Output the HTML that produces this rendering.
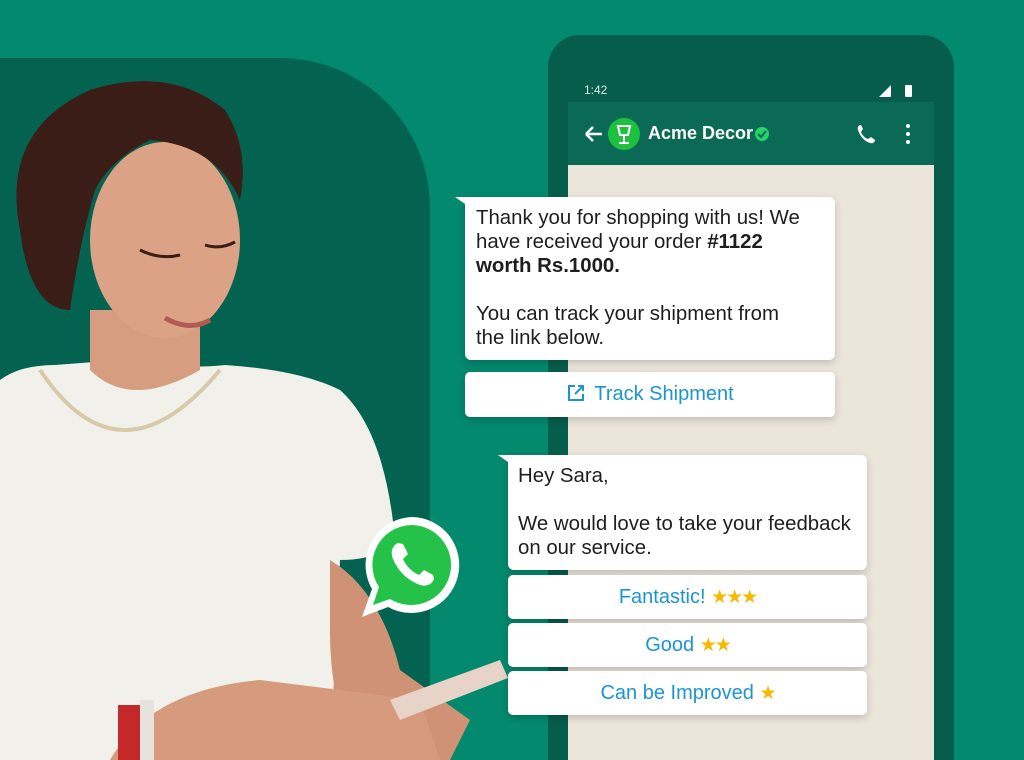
<!DOCTYPE html>
<html><head><meta charset="utf-8"><style>
*{margin:0;padding:0;box-sizing:border-box}
html,body{width:1024px;height:760px;overflow:hidden}
body{background:#03896e;font-family:"Liberation Sans",Arial,sans-serif;position:relative}
.abs{position:absolute}
.bub{position:absolute;background:#fff;border-radius:6px;box-shadow:0 3px 8px rgba(0,0,0,.18);color:#1e1e1e;font-size:20.4px;line-height:24px;white-space:nowrap}
.btn{position:absolute;background:#fff;border-radius:5px;box-shadow:0 3px 8px rgba(0,0,0,.18);color:#1a95d4;font-size:20px;text-align:center;line-height:44px}
.star{color:#f6b800;font-size:19px;letter-spacing:-2px}
</style></head><body>
<div class="abs" style="left:-20px;top:58px;width:450px;height:702px;background:#046350;border-top-right-radius:150px"></div>
<div class="abs" style="left:548px;top:35px;width:406px;height:725px;background:#075d4b;border-radius:32px 32px 0 0"></div>
<div class="abs" style="left:568px;top:78px;width:366px;height:682px;background:#ece5da"></div>
<div class="abs" style="left:568px;top:78px;width:366px;height:24px;background:#075d4b"></div>
<div class="abs" style="left:584px;top:83px;color:#d9e8e3;font-size:12px">1:42</div>
<svg class="abs" style="left:876px;top:83px" width="40" height="16"><polygon points="3,14 15,14 15,2" fill="#fff"/><rect x="29" y="2" width="7" height="12" rx="1" fill="#fff"/></svg>
<div class="abs" style="left:568px;top:102px;width:366px;height:63px;background:#0b6a55"></div>
<svg class="abs" style="left:580px;top:118px" width="340" height="34">
<path d="M6 16 H22 M6 16 L13 9 M6 16 L13 23" stroke="#fff" stroke-width="2.5" fill="none"/>
<circle cx="44" cy="16" r="16" fill="#1ec13f"/>
<path d="M38 8 H50 L48 17 H40 Z M44 17 V24 M39 25 H49" stroke="#fff" stroke-width="2" fill="none"/>
<circle cx="182" cy="16" r="7" fill="#26d366"/><path d="M178 16 L181 19 L186 13" stroke="#0b6a55" stroke-width="2" fill="none"/>
<path d="M281 7 c-2 0 -4 2 -3 5 c2 6 6 11 12 13 c3 1 5 -1 5 -3 l-4 -3 l-3 2 c-3 -1 -6 -4 -7 -7 l2 -3 z" fill="#fff"/>
<circle cx="328" cy="8" r="2" fill="#fff"/><circle cx="328" cy="16" r="2" fill="#fff"/><circle cx="328" cy="24" r="2" fill="#fff"/>
</svg>
<div class="abs" style="left:648px;top:123px;color:#fff;font-size:18px;font-weight:bold">Acme Decor</div>
<svg class="abs" style="left:0;top:70px" width="520" height="690">
<ellipse cx="255" cy="640" rx="120" ry="50" fill="#c98a6c"/>
<path d="M0 310 Q20 295 55 295 L120 290 Q180 300 225 295 Q300 300 340 320 Q385 360 395 470 Q380 490 340 490 L330 690 L0 690 Z" fill="#f1f0ea"/>
<path d="M40 300 Q120 420 220 300" stroke="#d8c9a8" stroke-width="4" fill="none"/>
<path d="M90 240 L90 300 Q130 340 200 300 L200 240 Z" fill="#d79d80"/>
<path d="M330 490 Q380 520 400 600 L470 650 L450 690 L360 690 Q330 640 330 560 Z" fill="#cf9275"/>
<path d="M110 690 Q150 620 260 610 L420 630 L440 690 Z" fill="#d69a7c"/>
<rect x="118" y="635" width="22" height="55" fill="#c42828"/><rect x="140" y="630" width="14" height="60" fill="#e6e3df"/>
<path d="M390 630 L500 590 L508 608 L400 650 Z" fill="#e8d3c8"/>
<ellipse cx="165" cy="170" rx="75" ry="98" fill="#dca286"/>
<path d="M20 160 Q0 60 90 20 Q170 -5 225 40 Q250 80 240 130 Q215 75 150 70 Q110 90 95 120 Q80 170 70 240 Q30 240 20 160 Z" fill="#3b1d17"/>
<path d="M140 180 Q160 190 180 185 M205 175 Q220 180 235 172" stroke="#3b1d17" stroke-width="3" fill="none"/>
<path d="M165 248 Q190 262 210 250" stroke="#b45a55" stroke-width="5" fill="none"/>
</svg>
<svg class="abs" style="left:360px;top:515px" width="106" height="106">
<path d="M52 2 A48 48 0 1 1 28 92 L2 102 L12 74 A48 48 0 0 1 52 2 Z" fill="#fff"/>
<path d="M52 10 A40 40 0 1 1 30 84 L13 90 L19 72 A40 40 0 0 1 52 10 Z" fill="#25c24a"/>
<path d="M38 28 c-5 2 -8 8 -5 16 c5 12 14 21 27 26 c7 2 12 -1 14 -6 l-1 -4 l-9 -5 l-5 5 c-7 -3 -13 -9 -16 -16 l5 -5 l-5 -10 z" fill="#fff"/>
</svg>
<svg class="abs" style="left:455px;top:197px" width="20" height="14"><polygon points="0,0 20,0 20,14" fill="#fff"/></svg>
<div class="bub" style="left:465px;top:197px;width:370px;height:163px;padding:9px 11px;border-top-left-radius:0">Thank you for shopping with us! We<br>have received your order <b>#1122</b><br><b>worth Rs.1000.</b><br><br>You can track your shipment from<br>the link below.</div>
<div class="btn" style="left:465px;top:372px;width:370px;height:45px"><svg width="20" height="20" style="vertical-align:-3px;margin-right:8px"><path d="M9 3 H3 V17 H17 V11 M12 3 H17 V8 M17 3 L9 11" stroke="#1a95d4" stroke-width="2" fill="none"/></svg>Track Shipment</div>
<svg class="abs" style="left:498px;top:455px" width="20" height="14"><polygon points="0,0 20,0 20,14" fill="#fff"/></svg>
<div class="bub" style="left:508px;top:455px;width:359px;height:115px;padding:9px 10px;border-top-left-radius:0">Hey Sara,<br><br>We would love to take your feedback<br>on our service.</div>
<div class="btn" style="left:508px;top:575px;width:359px;height:44px">Fantastic! <span class="star">★★★</span></div>
<div class="btn" style="left:508px;top:623px;width:359px;height:44px">Good <span class="star">★★</span></div>
<div class="btn" style="left:508px;top:671px;width:359px;height:44px">Can be Improved <span class="star">★</span></div>
</body></html>
